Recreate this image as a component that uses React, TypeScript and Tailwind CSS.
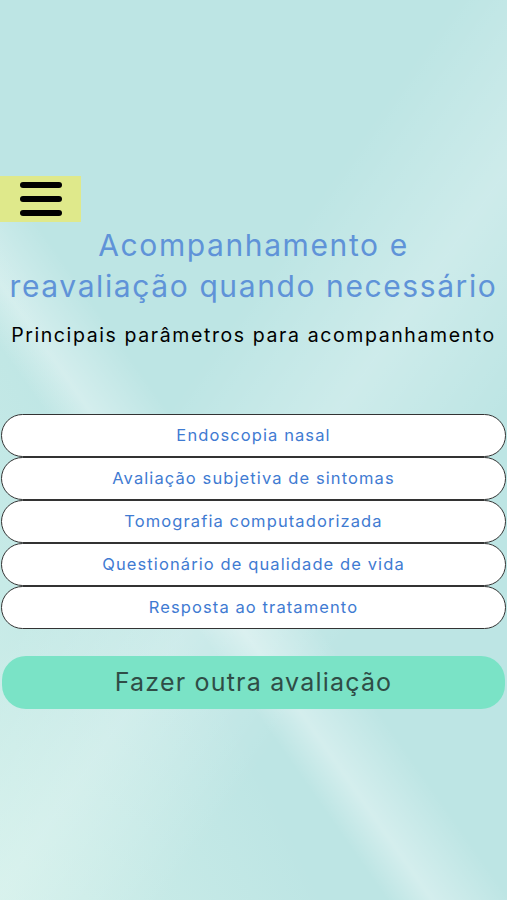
const items = [
  "Endoscopia nasal",
  "Avaliação subjetiva de sintomas",
  "Tomografia computadorizada",
  "Questionário de qualidade de vida",
  "Resposta ao tratamento",
];

export default function App() {
  return (
    <div
      className="relative w-[507px] h-[900px] overflow-hidden bg-[#bde5e4]"
      style={{ fontFamily: 'Inter, "Noto Sans", Arial, sans-serif' }}
    >
      {/* soft diagonal streaks of the background */}
      <div className="absolute inset-0 bg-[linear-gradient(125deg,rgba(255,255,255,0)_0%,rgba(255,255,255,0)_40%,rgba(255,255,255,0.25)_55%,rgba(255,255,255,0)_70%)]" />
      <div className="absolute inset-0 bg-[linear-gradient(235deg,rgba(180,220,230,0)_0%,rgba(180,220,230,0)_55%,rgba(255,255,255,0.35)_62%,rgba(255,255,255,0)_66%)]" />
      <div className="absolute inset-0 bg-[linear-gradient(65deg,rgba(230,250,240,0.45)_0%,rgba(230,250,240,0)_35%)]" />

      <div className="relative flex flex-col pt-[176px]">
        <div className="w-[81px] h-[46px] bg-[#dfe98b] flex flex-col justify-center gap-[8px] pl-[20px]">
          <span className="block w-[42px] h-[6px] rounded-full bg-black" />
          <span className="block w-[42px] h-[6px] rounded-full bg-black" />
          <span className="block w-[42px] h-[6px] rounded-full bg-black" />
        </div>

        <h1 className="mt-[3px] text-center text-[30px] leading-[41px] tracking-[1.6px] text-[#5f93d8] whitespace-nowrap">
          Acompanhamento e
          <br />
          reavaliação quando necessário
        </h1>

        <p className="mt-[14px] text-center text-[19.5px] leading-[28px] tracking-[1.6px] text-black whitespace-nowrap">
          Principais parâmetros para acompanhamento
        </p>

        <div className="mt-[65px] flex flex-col">
          {items.map((t) => (
            <div
              key={t}
              className="h-[43px] mx-[1px] rounded-full border-[1.5px] border-[#333] bg-white flex items-center justify-center text-[16.5px] tracking-[1.1px] text-[#3f7bd2]"
            >
              {t}
            </div>
          ))}
        </div>

        <button className="mt-[27px] mx-[2px] h-[53px] rounded-[24px] bg-[#7ae3c6] text-[25px] tracking-[1.2px] text-[#2f4d46]">
          Fazer outra avaliação
        </button>
      </div>
    </div>
  );
}
